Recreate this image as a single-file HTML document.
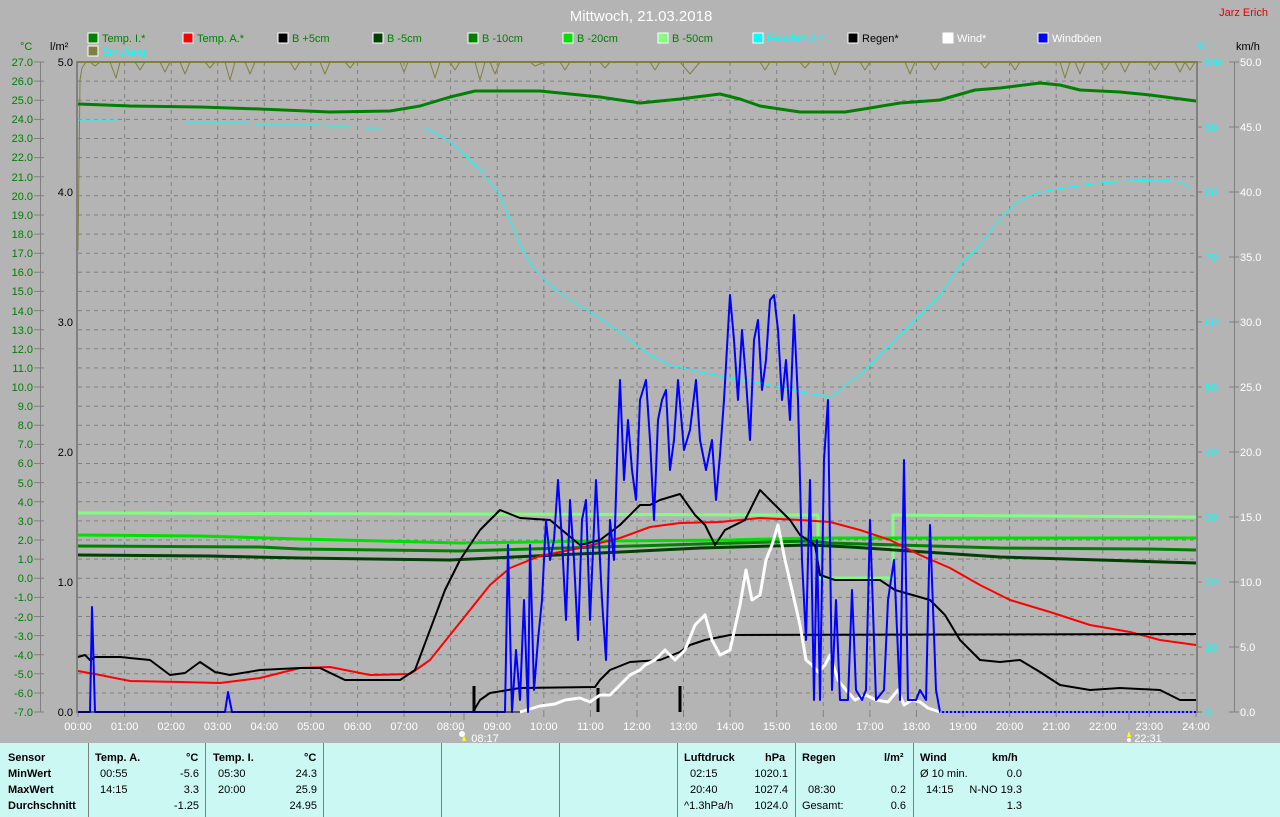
<!DOCTYPE html>
<html><head><meta charset="utf-8"><style>
html,body{margin:0;padding:0;width:1280px;height:817px;background:#b4b4b4;overflow:hidden;font-family:"Liberation Sans",Arial,sans-serif}
svg{position:absolute;left:0;top:0}
.tb{position:absolute;left:0;top:743px;width:1280px;height:74px;background:#ccf8f4}
.tb div{position:absolute;font-size:11px;color:#000;white-space:nowrap}
.b{font-weight:bold}
.vl{position:absolute;top:0;width:1px;height:74px;background:#808080}
</style></head><body>
<svg width="1280" height="743" viewBox="0 0 1280 743" font-family="Liberation Sans, Arial, sans-serif" font-size="11">
<rect width="1280" height="743" fill="#b4b4b4"/>
<text x="641" y="21" fill="#fff" font-size="15" text-anchor="middle">Mittwoch, 21.03.2018</text>
<text x="1268" y="16" fill="#e00000" font-size="11" text-anchor="end">Jarz Erich</text>
<!-- legend -->
<g font-size="11">
<rect x="88" y="33" width="10" height="10" fill="#008000" stroke="#fff"/><text x="102" y="42" fill="#008000">Temp. I.*</text>
<rect x="183" y="33" width="10" height="10" fill="#ff0000" stroke="#fff"/><text x="197" y="42" fill="#008000">Temp. A.*</text>
<rect x="278" y="33" width="10" height="10" fill="#000" stroke="#fff"/><text x="292" y="42" fill="#008000">B +5cm</text>
<rect x="373" y="33" width="10" height="10" fill="#004000" stroke="#fff"/><text x="387" y="42" fill="#008000">B -5cm</text>
<rect x="468" y="33" width="10" height="10" fill="#008000" stroke="#fff"/><text x="482" y="42" fill="#008000">B -10cm</text>
<rect x="563" y="33" width="10" height="10" fill="#00e000" stroke="#fff"/><text x="577" y="42" fill="#008000">B -20cm</text>
<rect x="658" y="33" width="10" height="10" fill="#80ff80" stroke="#fff"/><text x="672" y="42" fill="#008000">B -50cm</text>
<rect x="753" y="33" width="10" height="10" fill="#00ffff" stroke="#fff"/><text x="767" y="42" fill="#00ffff">Feuchte A.*</text>
<rect x="848" y="33" width="10" height="10" fill="#000" stroke="#fff"/><text x="862" y="42" fill="#000">Regen*</text>
<rect x="943" y="33" width="10" height="10" fill="#fff" stroke="#fff"/><text x="957" y="42" fill="#fff">Wind*</text>
<rect x="1038" y="33" width="10" height="10" fill="#0000ff" stroke="#fff"/><text x="1052" y="42" fill="#fff">Windböen</text>
<rect x="88" y="46" width="10" height="10" fill="#808040" stroke="#fff"/><text x="102" y="55" fill="#00ffff">Empfang</text>
</g>
<text x="20" y="50" fill="#008000">°C</text>
<text x="50" y="50" fill="#000">l/m²</text>
<text x="1197" y="50" fill="#00ffff">%</text>
<text x="1236" y="50" fill="#000">km/h</text>
<!-- grid -->
<g stroke="#808080" stroke-dasharray="4,4" stroke-width="1">
<path d="M78 81.1H1196M78 100.2H1196M78 119.4H1196M78 138.5H1196M78 157.6H1196M78 176.7H1196M78 195.8H1196M78 215H1196M78 234.1H1196M78 253.2H1196M78 272.3H1196M78 291.4H1196M78 310.6H1196M78 329.7H1196M78 348.8H1196M78 367.9H1196M78 387H1196M78 406.2H1196M78 425.3H1196M78 444.4H1196M78 463.5H1196M78 482.6H1196M78 501.8H1196M78 520.9H1196M78 540H1196M78 559.1H1196M78 578.2H1196M78 597.4H1196M78 616.5H1196M78 635.6H1196M78 654.7H1196M78 673.8H1196M78 693H1196"/>
<path d="M124.6 62V712M171.2 62V712M217.7 62V712M264.3 62V712M310.9 62V712M357.5 62V712M404.1 62V712M450.6 62V712M497.2 62V712M543.8 62V712M590.4 62V712M637 62V712M683.5 62V712M730.1 62V712M776.7 62V712M823.3 62V712M869.9 62V712M916.4 62V712M963 62V712M1009.6 62V712M1056.2 62V712M1102.8 62V712M1149.3 62V712"/>
</g>
<!-- axes -->
<g stroke="#808080" fill="none">
<path d="M77 61V713M1197 61V713" stroke-width="2"/>
<path d="M77 62H1197" stroke="#808040" stroke-width="2"/>
<path d="M40.5 62V712"/>
<path d="M1234.5 62V712"/>
<path d="M34 62H44M34 81.1H44M34 100.2H44M34 119.4H44M34 138.5H44M34 157.6H44M34 176.7H44M34 195.8H44M34 215H44M34 234.1H44M34 253.2H44M34 272.3H44M34 291.4H44M34 310.6H44M34 329.7H44M34 348.8H44M34 367.9H44M34 387H44M34 406.2H44M34 425.3H44M34 444.4H44M34 463.5H44M34 482.6H44M34 501.8H44M34 520.9H44M34 540H44M34 559.1H44M34 578.2H44M34 597.4H44M34 616.5H44M34 635.6H44M34 654.7H44M34 673.8H44M34 693H44M34 712H44"/>
<path d="M1229 62H1239M1229 127H1239M1229 192H1239M1229 257H1239M1229 322H1239M1229 387H1239M1229 452H1239M1229 517H1239M1229 582H1239M1229 647H1239M1229 712H1239"/>
<path d="M1197 62H1202M1197 127H1202M1197 192H1202M1197 257H1202M1197 322H1202M1197 387H1202M1197 452H1202M1197 517H1202M1197 582H1202M1197 647H1202M1197 712H1202"/>
<path d="M78 712V717M124.6 712V717M171.2 712V717M217.7 712V717M264.3 712V717M310.9 712V717M357.5 712V717M404.1 712V717M450.6 712V717M497.2 712V717M543.8 712V717M590.4 712V717M637 712V717M683.5 712V717M730.1 712V717M776.7 712V717M823.3 712V717M869.9 712V717M916.4 712V717M963 712V717M1009.6 712V717M1056.2 712V717M1102.8 712V717M1149.3 712V717M1196 712V717M464 712V720M1129 712V720"/>
</g>
<!-- left labels -->
<g fill="#008000" text-anchor="end" font-size="11">
<text x="33" y="66">27.0</text><text x="33" y="85">26.0</text><text x="33" y="104">25.0</text><text x="33" y="123">24.0</text><text x="33" y="142">23.0</text><text x="33" y="161">22.0</text><text x="33" y="181">21.0</text><text x="33" y="200">20.0</text><text x="33" y="219">19.0</text><text x="33" y="238">18.0</text><text x="33" y="257">17.0</text><text x="33" y="276">16.0</text><text x="33" y="295">15.0</text><text x="33" y="315">14.0</text><text x="33" y="334">13.0</text><text x="33" y="353">12.0</text><text x="33" y="372">11.0</text><text x="33" y="391">10.0</text><text x="33" y="410">9.0</text><text x="33" y="429">8.0</text><text x="33" y="448">7.0</text><text x="33" y="467">6.0</text><text x="33" y="487">5.0</text><text x="33" y="506">4.0</text><text x="33" y="525">3.0</text><text x="33" y="544">2.0</text><text x="33" y="563">1.0</text><text x="33" y="582">0.0</text><text x="33" y="601">-1.0</text><text x="33" y="621">-2.0</text><text x="33" y="640">-3.0</text><text x="33" y="659">-4.0</text><text x="33" y="678">-5.0</text><text x="33" y="697">-6.0</text><text x="33" y="716">-7.0</text>
</g>
<g fill="#000" text-anchor="end"><text x="73" y="66">5.0</text><text x="73" y="196">4.0</text><text x="73" y="326">3.0</text><text x="73" y="456">2.0</text><text x="73" y="586">1.0</text><text x="73" y="716">0.0</text></g>
<g fill="#00ffff"><text x="1203" y="66">100</text><text x="1205" y="131">90</text><text x="1205" y="196">80</text><text x="1205" y="261">70</text><text x="1205" y="326">60</text><text x="1205" y="391">50</text><text x="1205" y="456">40</text><text x="1205" y="521">30</text><text x="1205" y="586">20</text><text x="1205" y="651">10</text><text x="1205" y="716">0</text></g>
<g fill="#fff"><text x="1240" y="66">50.0</text><text x="1240" y="131">45.0</text><text x="1240" y="196">40.0</text><text x="1240" y="261">35.0</text><text x="1240" y="326">30.0</text><text x="1240" y="391">25.0</text><text x="1240" y="456">20.0</text><text x="1240" y="521">15.0</text><text x="1240" y="586">10.0</text><text x="1240" y="651">5.0</text><text x="1240" y="716">0.0</text></g>
<g fill="#fff" text-anchor="middle"><text x="78" y="730">00:00</text><text x="124.6" y="730">01:00</text><text x="171.2" y="730">02:00</text><text x="217.7" y="730">03:00</text><text x="264.3" y="730">04:00</text><text x="310.9" y="730">05:00</text><text x="357.5" y="730">06:00</text><text x="404.1" y="730">07:00</text><text x="450.6" y="730">08:00</text><text x="497.2" y="730">09:00</text><text x="543.8" y="730">10:00</text><text x="590.4" y="730">11:00</text><text x="637" y="730">12:00</text><text x="683.5" y="730">13:00</text><text x="730.1" y="730">14:00</text><text x="776.7" y="730">15:00</text><text x="823.3" y="730">16:00</text><text x="869.9" y="730">17:00</text><text x="916.4" y="730">18:00</text><text x="963" y="730">19:00</text><text x="1009.6" y="730">20:00</text><text x="1056.2" y="730">21:00</text><text x="1102.8" y="730">22:00</text><text x="1149.3" y="730">23:00</text><text x="1196" y="730">24:00</text>
<text x="485" y="742">08:17</text><text x="1148" y="742">22:31</text></g>
<circle cx="462" cy="734" r="3" fill="#fff"/><path d="M464 735l2 6h-4z" fill="#ff0"/>
<circle cx="1129" cy="740" r="2" fill="#fff"/><path d="M1129 731l2 6h-4z" fill="#ff0"/>
<!-- curves -->
<g fill="none" stroke-linejoin="round">
<path stroke="#808040" d="M78 250L80 80L82 68L86 62L90 62L95 66L100 62L110 62L116 78L120 62L135 62L140 70L145 62L160 62L165 72L170 62L180 62L185 74L190 62L205 62L210 68L215 62L225 62L230 80L235 62L245 62L250 74L255 62L290 62L295 70L300 62L320 62L325 74L330 62L345 62L350 68L355 62L400 62L404 72L408 62L430 62L435 78L440 62L450 62L455 70L460 62L475 62L480 80L485 62L490 62L495 74L500 62L530 62L535 66L545 62L560 62L565 70L570 62L600 62L605 68L610 62L650 62L655 70L660 62L680 62L690 74L700 62L760 62L765 70L770 62L800 62L805 68L810 62L830 62L835 75L840 62L860 62L865 70L870 62L905 62L910 74L915 62L930 62L935 70L940 62L980 62L985 68L990 62L1010 62L1015 70L1020 62L1060 62L1065 78L1070 62L1075 62L1080 74L1085 62L1100 62L1105 70L1110 62L1120 62L1125 72L1130 62L1150 62L1155 70L1160 62L1175 62L1180 72L1185 62L1190 70L1195 62"/>
<path stroke="#00ffff" d="M78 120H118M185 122H250M255 124H320M325 127H350M365 128H382M425 128L445 138L460 150L480 170L500 195L510 220L520 245L535 270L550 285L570 300L590 312L610 325L630 340L650 355L670 365L700 372L730 378L760 383L785 388L800 392L820 395L830 398L845 385L860 375L880 355L900 335L920 315L940 295L960 265L980 245L1000 218L1020 200L1040 192L1070 187L1100 183L1130 181L1160 180L1180 182L1190 188"/>
<path stroke="#008000" stroke-width="3" d="M78 104L130 106L200 107L260 109L330 112L390 111L420 106L450 97L475 91L540 91L600 97L640 103L680 99L720 94L740 99L760 106L800 112L845 112L870 108L900 103L940 100L975 90L1000 88L1040 83L1060 85L1080 90L1120 92L1150 95L1196 101"/>
<path stroke="#80ff80" stroke-width="3" d="M78 513L460 514L818 515V578H893V515L1196 517"/>
<path stroke="#00e000" stroke-width="3" d="M78 535L200 536L300 539L460 543L600 541L730 540L810 538L1000 538L1196 538"/>
<path stroke="#008000" stroke-width="3" d="M78 546L260 547L300 549L460 551L600 547L700 544L810 541L830 543L1000 548L1150 549L1196 550"/>
<path stroke="#004000" stroke-width="3" d="M78 555L210 556L300 558L450 560L600 553L700 548L810 545L850 547L1000 557L1100 560L1196 563"/>
<path stroke="#ff0000" stroke-width="2" d="M78 671L100 675L130 681L180 682L220 683L260 678L300 668L330 667L370 675L410 674L430 660L450 635L470 610L490 585L510 568L540 556L580 548L620 538L650 527L680 523L720 522L760 518L800 520L830 522L860 530L890 540L920 555L950 568L980 585L1010 600L1050 612L1090 625L1130 632L1160 640L1196 645"/>
<path stroke="#000" stroke-width="2" d="M78 657L85 655L90 660L95 657L120 657L150 660L170 675L185 673L200 662L215 672L230 675L260 670L300 668L320 668L345 680L400 680L415 670L430 630L445 590L460 560L480 530L500 510L520 518L550 520L580 545L600 540L620 525L640 505L650 505L660 500L680 494L695 515L705 525L715 545L725 530L745 520L760 490L775 505L790 520L800 535L815 545L820 575L835 580L880 580L895 590L930 600L945 615L960 640L980 660L1000 662L1020 660L1040 672L1060 685L1090 690L1120 688L1160 690L1180 700L1196 700"/>
<path stroke="#000" stroke-width="2" d="M473 712L480 700L490 693L520 688L595 687L600 680L610 670L630 662L660 660L680 652L690 645L705 640L730 635L1196 634"/>
<path stroke="#000" stroke-width="3" d="M474 712V686M598 712V688M680 712V686"/>
<path stroke="#fff" stroke-width="3" d="M520 712L540 706L555 704L565 700L580 698L590 702L600 695L610 695L620 685L630 675L640 670L645 665L655 660L665 650L675 660L685 650L695 625L705 615L712 640L720 655L730 650L740 605L746 570L752 600L760 595L766 560L772 545L778 525L785 560L792 590L800 625L806 660L812 665L818 672L825 665L830 655L838 680L846 690L855 700L866 695L876 700L888 702L898 690L904 705L912 700L920 702L928 708L940 712"/>
<path stroke="#0000ff" stroke-width="2" d="M78 712H90L92 607L95 712H225L228 692L232 712H505L508 545L512 712L516 650L520 700L524 600L528 712L530 545L534 690L538 640L542 600L546 520L550 560L554 540L558 480L562 540L566 620L570 500L574 560L578 640L582 520L586 500L590 620L596 480L602 600L606 660L610 520L614 560L618 430L620 380L624 480L628 420L632 470L636 500L640 400L646 380L650 440L654 520L658 420L662 400L666 390L670 470L674 440L678 380L684 450L690 430L696 380L700 440L706 470L712 440L716 500L720 455L724 400L730 295L734 340L738 400L742 330L746 380L750 440L754 340L758 320L762 390L766 360L770 300L774 295L778 330L782 400L786 360L790 420L794 315L798 400L802 560L806 640L810 480L814 700L817 540L820 700L824 460L828 400L832 690L836 600L840 700L848 700L852 590L856 690L862 700L866 690L870 520L876 700L884 690L888 600L894 560L900 700L904 460L908 700L916 700L920 690L926 700L930 525L936 690L940 712H1196"/>
<path stroke="#fff" stroke-dasharray="2,2" d="M940 712H1196"/>
<path stroke="#000" d="M78 712H520"/>
</g>
</svg>
<div class="tb">
<div class="vl" style="left:88px"></div><div class="vl" style="left:205px"></div><div class="vl" style="left:323px"></div><div class="vl" style="left:441px"></div><div class="vl" style="left:559px"></div><div class="vl" style="left:677px"></div><div class="vl" style="left:795px"></div><div class="vl" style="left:913px"></div>
<div class="b" style="left:8px;top:9px">Sensor</div><div class="b" style="left:8px;top:25px">MinWert</div><div class="b" style="left:8px;top:41px">MaxWert</div><div class="b" style="left:8px;top:57px">Durchschnitt</div>
<div class="b" style="left:95px;top:9px">Temp. A.</div><div class="b" style="left:186px;top:9px">°C</div>
<div style="left:100px;top:25px">00:55</div><div style="right:1081px;top:25px">-5.6</div>
<div style="left:100px;top:41px">14:15</div><div style="right:1081px;top:41px">3.3</div>
<div style="right:1081px;top:57px">-1.25</div>
<div class="b" style="left:213px;top:9px">Temp. I.</div><div class="b" style="left:304px;top:9px">°C</div>
<div style="left:218px;top:25px">05:30</div><div style="right:963px;top:25px">24.3</div>
<div style="left:218px;top:41px">20:00</div><div style="right:963px;top:41px">25.9</div>
<div style="right:963px;top:57px">24.95</div>
<div class="b" style="left:684px;top:9px">Luftdruck</div><div class="b" style="left:765px;top:9px">hPa</div>
<div style="left:690px;top:25px">02:15</div><div style="right:492px;top:25px">1020.1</div>
<div style="left:690px;top:41px">20:40</div><div style="right:492px;top:41px">1027.4</div>
<div style="left:684px;top:57px">^1.3hPa/h</div><div style="right:492px;top:57px">1024.0</div>
<div class="b" style="left:802px;top:9px">Regen</div><div class="b" style="left:884px;top:9px">l/m²</div>
<div style="left:808px;top:41px">08:30</div><div style="right:374px;top:41px">0.2</div>
<div style="left:802px;top:57px">Gesamt:</div><div style="right:374px;top:57px">0.6</div>
<div class="b" style="left:920px;top:9px">Wind</div><div class="b" style="left:992px;top:9px">km/h</div>
<div style="left:920px;top:25px">Ø 10 min.</div><div style="right:258px;top:25px">0.0</div>
<div style="left:926px;top:41px">14:15</div><div style="right:258px;top:41px">N-NO 19.3</div>
<div style="right:258px;top:57px">1.3</div>
</div>
</body></html>
